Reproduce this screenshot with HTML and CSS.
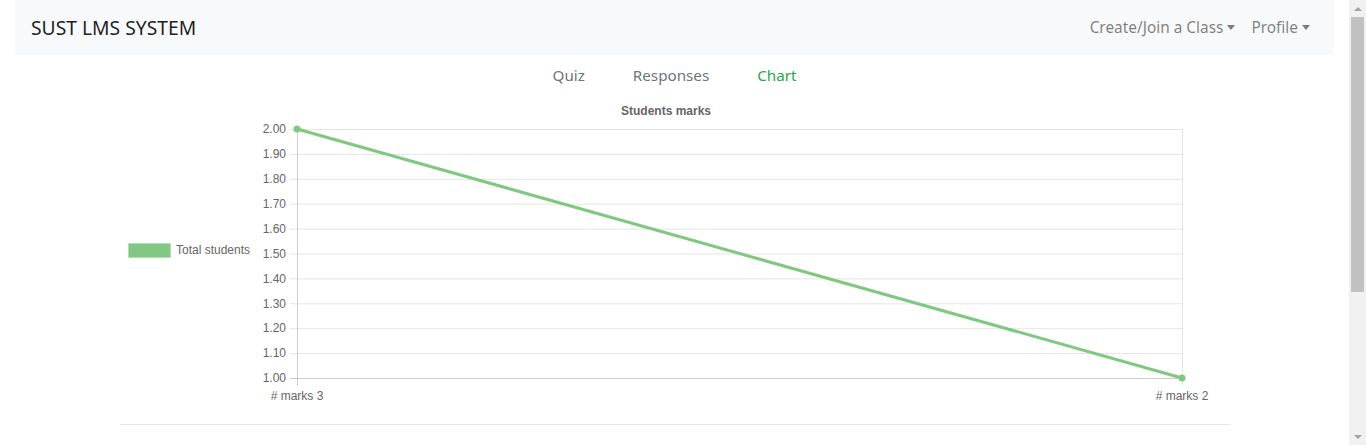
FILE: index.html
```html
<!DOCTYPE html>
<html lang="en">
<head>
<meta charset="utf-8">
<title>SUST LMS SYSTEM</title>
<link rel="stylesheet" href="styles.css">
</head>
<body>
<div class="page">
  <nav class="navbar">
    <a class="brand" href="#">SUST LMS SYSTEM</a>
    <ul class="nav-right">
      <li><a class="nav-link dropdown" href="#">Create/Join a Class</a></li>
      <li><a class="nav-link dropdown" href="#">Profile</a></li>
    </ul>
  </nav>
  <ul class="tabs">
    <li><a class="tab" href="#">Quiz</a></li>
    <li><a class="tab" href="#">Responses</a></li>
    <li><a class="tab active" href="#">Chart</a></li>
  </ul>
  <div class="container">
    <svg class="chart" width="1110" height="312" viewBox="0 0 1110 312" xmlns="http://www.w3.org/2000/svg">
      <text class="title" x="546" y="19" text-anchor="middle">Students marks</text>
      <rect x="8.5" y="147.5" width="42" height="14" fill="#80c883" stroke="#b5e0b6" stroke-width="1"/>
      <text class="lbl" x="56" y="158">Total students</text>
      <g stroke="#e5e5e5" stroke-width="1">
        <line x1="170" y1="33.5" x2="1062" y2="33.5"/>
        <line x1="170" y1="58.4" x2="1062" y2="58.4"/>
        <line x1="170" y1="83.3" x2="1062" y2="83.3"/>
        <line x1="170" y1="108.2" x2="1062" y2="108.2"/>
        <line x1="170" y1="133.1" x2="1062" y2="133.1"/>
        <line x1="170" y1="158" x2="1062" y2="158"/>
        <line x1="170" y1="182.9" x2="1062" y2="182.9"/>
        <line x1="170" y1="207.8" x2="1062" y2="207.8"/>
        <line x1="170" y1="232.7" x2="1062" y2="232.7"/>
        <line x1="170" y1="257.6" x2="1062" y2="257.6"/>
        <line x1="1062.5" y1="33" x2="1062.5" y2="289"/>
      </g>
      <g stroke="#cccccc" stroke-width="1">
        <line x1="170" y1="282.5" x2="1062" y2="282.5"/>
        <line x1="177.5" y1="33" x2="177.5" y2="289"/>
      </g>
      <g class="lbl" text-anchor="end">
        <text x="166" y="37">2.00</text>
        <text x="166" y="62">1.90</text>
        <text x="166" y="87">1.80</text>
        <text x="166" y="112">1.70</text>
        <text x="166" y="137">1.60</text>
        <text x="166" y="162">1.50</text>
        <text x="166" y="187">1.40</text>
        <text x="166" y="212">1.30</text>
        <text x="166" y="236">1.20</text>
        <text x="166" y="261">1.10</text>
        <text x="166" y="286">1.00</text>
      </g>
      <g class="lbl" text-anchor="middle">
        <text x="177" y="304">#&#160;marks 3</text>
        <text x="1062" y="304">#&#160;marks 2</text>
      </g>
      <line x1="177" y1="33" x2="1062" y2="282" stroke="#7fc87f" stroke-width="3"/>
      <circle cx="177" cy="33" r="3.5" fill="#7fc87f"/>
      <circle cx="1062" cy="282" r="3.5" fill="#7fc87f"/>
    </svg>
    <hr class="divider">
  </div>
</div>
<div class="scrollbar" aria-hidden="true">
  <div class="sb-arrow sb-up"></div>
  <div class="sb-track"><div class="sb-thumb"></div></div>
  <div class="sb-arrow sb-down"></div>
</div>
</body>
</html>
```
FILE: styles.css
```css
html, body {
  margin: 0;
  padding: 0;
}
body {
  font-family: "Noto Sans", "Open Sans", sans-serif;
  color: #212529;
  background: #fff;
  overflow: hidden;
}
.page {
  padding: 0 15px;
  margin-right: 17px;
}
.navbar {
  background: #f8f9fa;
  height: 55px;
  padding: 0 16px;
  display: flex;
  align-items: center;
  justify-content: space-between;
}
.brand {
  font-size: 19.3px;
  color: rgba(0, 0, 0, 0.9);
  text-decoration: none;
  padding-bottom: 1px;
}
.nav-right {
  list-style: none;
  margin: 0;
  padding: 0;
  display: flex;
}
.nav-link {
  display: block;
  padding: 8px 8px;
  font-size: 15.4px;
  color: rgba(0, 0, 0, 0.5);
  text-decoration: none;
}
.dropdown::after {
  content: "";
  display: inline-block;
  margin-left: 4px;
  vertical-align: 3px;
  border-top: 5px solid;
  border-left: 4.5px solid transparent;
  border-right: 4.5px solid transparent;
}
.tabs {
  list-style: none;
  margin: 0;
  padding: 0;
  display: flex;
  justify-content: center;
}
.tab {
  display: block;
  padding: 8px 24px;
  font-size: 15.2px;
  line-height: 25px;
  color: #6c757d;
  text-decoration: none;
}
.tab.active {
  color: #28a745;
}
.container {
  width: 1110px;
  margin: 0 auto;
}
.chart {
  display: block;
  font-family: "Liberation Sans", Arial, sans-serif;
}
.chart .title {
  font-size: 12px;
  font-weight: bold;
  fill: #666;
}
.chart .lbl {
  font-size: 12px;
  fill: #666;
}
.divider {
  margin: 16px 0 0;
  border: 0;
  border-top: 1px solid rgba(0, 0, 0, 0.1);
}
.scrollbar {
  position: fixed;
  top: 0;
  right: 0;
  width: 17px;
  height: 100%;
  background: #f1f1f1;
  display: flex;
  flex-direction: column;
}
.sb-arrow {
  height: 17px;
  flex: none;
  display: flex;
  align-items: center;
  justify-content: center;
}
.sb-up::before {
  content: "";
  border-bottom: 4px solid #a3a3a3;
  border-left: 4px solid transparent;
  border-right: 4px solid transparent;
}
.sb-down::before {
  content: "";
  border-top: 4px solid #a3a3a3;
  border-left: 4px solid transparent;
  border-right: 4px solid transparent;
}
.sb-track {
  flex: 1;
  padding: 0 2px;
}
.sb-thumb {
  height: 275px;
  background: #c1c1c1;
}
```
